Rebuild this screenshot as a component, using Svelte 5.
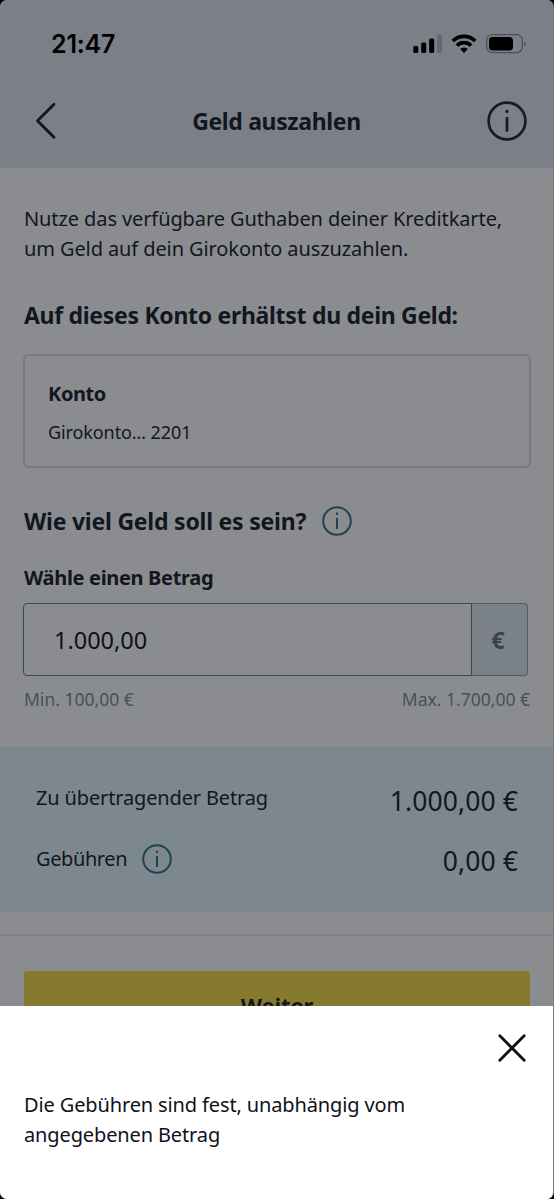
<script lang="ts">
  let amount = '1.000,00';
  let sheetOpen = true;

  const summary = [
    { label: 'Zu übertragender Betrag', value: '1.000,00 €', info: false },
    { label: 'Gebühren', value: '0,00 €', info: true }
  ];
</script>

{#snippet infoIcon()}
  <svg class="info-icon" viewBox="0 0 30 30" aria-hidden="true">
    <circle cx="15" cy="15" r="13.8" fill="none" stroke="currentColor" stroke-width="2" />
    <circle cx="15" cy="7.8" r="1.2" fill="currentColor" />
    <path d="M15 12v11" fill="none" stroke="currentColor" stroke-width="2" />
  </svg>
{/snippet}

<div class="device">
  <div class="screen">
    <header>
      <div class="status-bar">
        <span class="time">21:47</span>
        <div class="status-icons">
          <svg width="29" height="20" viewBox="0 0 29 20" aria-hidden="true">
            <rect x="0.3" y="12" width="5" height="7" rx="1.5" />
            <rect x="8.2" y="8.5" width="5" height="10.5" rx="1.5" />
            <rect x="16.2" y="4.5" width="5" height="14.5" rx="1.5" />
            <rect x="24" y="0.5" width="5" height="18.5" rx="1.5" fill="#65686f" />
          </svg>
          <svg width="26" height="20" viewBox="0 0 26 20" aria-hidden="true">
            <g fill="none" stroke="#000" stroke-width="3.8">
              <path d="M1.8 7a16 16 0 0 1 22.4 0" />
              <path d="M5.9 11.6a10.1 10.1 0 0 1 14.2 0" />
            </g>
            <path d="M13 19l-3.9-3.9a5.6 5.6 0 0 1 7.8 0z" />
          </svg>
          <svg width="40" height="20" viewBox="0 0 40 20" aria-hidden="true">
            <rect x="0.7" y="0.7" width="35.6" height="18" rx="5.6" fill="none" stroke="#4d5056" stroke-width="1.3" />
            <rect x="3" y="3" width="24" height="13.4" rx="3.6" />
            <path d="M38 7.2c2 .8 2 4.2 0 5z" fill="#4d5056" />
          </svg>
        </div>
      </div>
      <nav>
        <button type="button" class="back" aria-label="Zurück">
          <svg width="22" height="38" viewBox="0 0 22 38" aria-hidden="true">
            <path d="M19 2.3L2.5 18.8L19 35.3" />
          </svg>
        </button>
        <h1>Geld auszahlen</h1>
        <button type="button" class="help" aria-label="Info">{@render infoIcon()}</button>
      </nav>
    </header>

    <main>
      <p class="intro">
        Nutze das verfügbare Guthaben deiner Kreditkarte,<br />um Geld auf dein Girokonto auszuzahlen.
      </p>

      <h2 class="account-title">Auf dieses Konto erhältst du dein Geld:</h2>
      <div class="account">
        <strong>Konto</strong>
        <span>Girokonto… 2201</span>
      </div>

      <div class="amount-title">
        <h2>Wie viel Geld soll es sein?</h2>
        {@render infoIcon()}
      </div>
      <label for="amount">Wähle einen Betrag</label>
      <div class="amount-field">
        <input id="amount" type="text" bind:value={amount} />
        <span class="unit">€</span>
      </div>
      <div class="limits">
        <span>Min. 100,00 €</span>
        <span>Max. 1.700,00 €</span>
      </div>
    </main>

    <section class="summary">
      {#each summary as row}
        <div class="row">
          <span class="row-label" class:with-info={row.info}>{row.label}</span>
          {#if row.info}{@render infoIcon()}{/if}
          <span class="value">{row.value}</span>
        </div>
      {/each}
    </section>

    <footer>
      <button type="button" class="next">Weiter</button>
    </footer>

    {#if sheetOpen}
      <div class="sheet" role="dialog" aria-label="Gebühren">
        <button type="button" class="close" aria-label="Schließen" on:click={() => (sheetOpen = false)}>
          <svg width="28" height="28" viewBox="0 0 28 28" aria-hidden="true">
            <path d="M1.8 1.8L26.2 26.2M26.2 1.8L1.8 26.2" />
          </svg>
        </button>
        <p>Die Gebühren sind fest, unabhängig vom<br />angegebenen Betrag</p>
      </div>
    {/if}
  </div>
</div>

<style>
  :global(body) {
    margin: 0;
    background: #000;
  }

  .device {
    width: 554px;
    height: 1199px;
    background: #000;
    overflow: hidden;
  }

  .screen {
    position: relative;
    box-sizing: border-box;
    height: 100%;
    overflow: hidden;
    border-right: 1px solid #77797e;
    border-radius: 7px;
    background: #8b8c90;
    color: #12161f;
    font-family: 'Noto Sans', 'Open Sans', sans-serif;
    font-size: 20px;
    letter-spacing: -0.1px;
  }

  h1,
  h2,
  p {
    margin: 0;
  }

  button {
    display: flex;
    padding: 0;
    border: 0;
    background: none;
    color: inherit;
    font: inherit;
    letter-spacing: inherit;
  }

  svg {
    display: block;
    flex: none;
  }

  header {
    box-sizing: border-box;
    height: 168px;
    background: #7b7f87;
  }

  .status-bar {
    display: flex;
    align-items: center;
    justify-content: space-between;
    height: 88px;
    padding: 0 27px 0 51px;
  }

  .time {
    color: #000;
    font: 600 25px/30px Inter, sans-serif;
    letter-spacing: -0.2px;
  }

  .status-icons {
    display: flex;
    gap: 9px;
  }

  nav {
    display: flex;
    align-items: center;
    justify-content: space-between;
    height: 66px;
    padding: 0 26px 0 35px;
  }

  .back {
    width: 31px;
  }

  .back path,
  .close path {
    fill: none;
    stroke: currentColor;
    stroke-width: 2.9;
    stroke-linecap: round;
    stroke-linejoin: round;
  }

  h1 {
    font-size: 23px;
    line-height: 30px;
    letter-spacing: -0.35px;
  }

  .info-icon {
    width: 30px;
    height: 30px;
    color: #1d4453;
  }

  .help .info-icon {
    width: 40px;
    height: 40px;
    color: #161b28;
  }

  main {
    padding: 36px 23px 0 24px;
  }

  .intro,
  .sheet p {
    line-height: 29.5px;
    white-space: nowrap;
  }

  h2 {
    font-size: 23px;
    line-height: 32px;
    letter-spacing: -0.3px;
    white-space: nowrap;
  }

  .account-title {
    margin-top: 36px;
  }

  .account {
    display: flex;
    flex-direction: column;
    gap: 12px;
    box-sizing: border-box;
    height: 114px;
    margin: 23px -1px 0 -1px;
    padding: 24px 23px 0;
    border: 2px solid #747a7f;
    border-radius: 6px;
  }

  .account strong {
    line-height: 28px;
    letter-spacing: -0.4px;
  }

  .account span {
    font-size: 18px;
    line-height: 24px;
    letter-spacing: -0.1px;
  }

  .amount-title {
    display: flex;
    align-items: center;
    gap: 16px;
    margin-top: 37px;
  }

  .amount-title h2 {
    letter-spacing: -0.22px;
  }

  label {
    display: block;
    margin-top: 26px;
    font-weight: 700;
    line-height: 30px;
    letter-spacing: -0.33px;
  }

  .amount-field {
    display: flex;
    height: 73px;
    margin: 10px 2px 0 -1px;
  }

  .amount-field input {
    box-sizing: border-box;
    flex: 1;
    min-width: 0;
    padding: 0 30px;
    border: 1.5px solid #384951;
    border-radius: 4px 0 0 4px;
    outline: 0;
    background: transparent;
    color: #0c1018;
    font: inherit;
    font-size: 23.5px;
  }

  .unit {
    display: grid;
    place-items: center;
    box-sizing: border-box;
    width: 56px;
    padding-right: 3px;
    border: 1.5px solid #4f5c63;
    border-left: 0;
    border-radius: 0 4px 4px 0;
    background: #7b8189;
    color: #33444b;
    font-size: 23.5px;
    font-weight: 700;
  }

  .limits {
    display: flex;
    justify-content: space-between;
    margin-top: 11px;
    color: #42535a;
    font-size: 17.5px;
    line-height: 24px;
    letter-spacing: 0;
  }

  .summary {
    box-sizing: border-box;
    height: 165px;
    margin-top: 36px;
    padding: 22px 35px 0 36px;
    background: #7c888e;
  }

  .row {
    display: flex;
    align-items: center;
    height: 60px;
  }

  .row-label {
    padding-bottom: 3px;
    letter-spacing: -0.15px;
  }

  .row-label.with-info {
    margin-right: 15px;
    padding-bottom: 1px;
    letter-spacing: -0.4px;
  }

  .value {
    margin-left: auto;
    padding-top: 3px;
    font-size: 26.5px;
    letter-spacing: 0.1px;
  }

  footer {
    margin-top: 22px;
    padding: 35px 23px 0 24px;
    border-top: 2px solid #7d8186;
  }

  .next {
    align-items: center;
    justify-content: center;
    width: 100%;
    height: 68px;
    border-radius: 3px;
    background: #857a2e;
    font-size: 22px;
    font-weight: 700;
  }

  .sheet {
    position: absolute;
    right: -1px;
    bottom: 0;
    left: 0;
    box-sizing: border-box;
    height: 193px;
    padding: 28px 28px 0 24px;
    background: #fff;
    color: #0f1119;
    letter-spacing: -0.13px;
  }

  .close {
    margin: 0 0 28px auto;
  }
</style>
